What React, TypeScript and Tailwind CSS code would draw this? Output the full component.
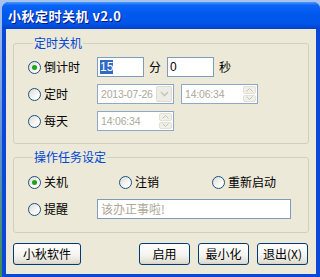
const font = "font-['Noto_Sans_CJK_SC','Noto_Sans',sans-serif]";

const Radio = ({ checked }: { checked?: boolean }) => (
  <span className="w-[13px] h-[13px] shrink-0 rounded-full border border-[#1C5180] bg-[linear-gradient(135deg,#DCDCD7_0%,#FFFFFF_80%)] flex items-center justify-center">
    {checked && <span className="w-[5px] h-[5px] rounded-full bg-[#21A121]" />}
  </span>
);

const RadioLabel = ({ label, checked, className }: { label: string; checked?: boolean; className?: string }) => (
  <label className={`flex items-center gap-[3px] text-[12px] leading-[14px] text-black ${className ?? ''}`}>
    <Radio checked={checked} />
    <span>{label}</span>
  </label>
);

const Spin = () => (
  <span className="flex flex-col gap-[1px] w-[13px] h-[16px] shrink-0">
    <span className="flex-1 rounded-[2px] bg-[#F0EFE8] border border-[#E2E1D8] flex items-center justify-center">
      <svg width="7" height="4" viewBox="0 0 7 4"><path d="M0.5 3.5 L3.5 0.5 L6.5 3.5" fill="none" stroke="#C3C2B8" strokeWidth="1" /></svg>
    </span>
    <span className="flex-1 rounded-[2px] bg-[#F0EFE8] border border-[#E2E1D8] flex items-center justify-center">
      <svg width="7" height="4" viewBox="0 0 7 4"><path d="M0.5 0.5 L3.5 3.5 L6.5 0.5" fill="none" stroke="#C3C2B8" strokeWidth="1" /></svg>
    </span>
  </span>
);

const Dropdown = () => (
  <span className="w-[16px] h-[16px] shrink-0 rounded-[2px] bg-[#EEEDE5] border border-[#DEDDD4] flex items-center justify-center">
    <svg width="9" height="6" viewBox="0 0 9 6"><path d="M1 1 L4.5 4.5 L8 1" fill="none" stroke="#C6C5BC" strokeWidth="1.6" /></svg>
  </span>
);

const TimeBox = ({ text, drop }: { text: string; drop?: boolean }) => (
  <div className="w-[77px] h-[20px] border border-[#8FA8C8] bg-white flex items-center justify-between pl-[3px] pr-[1px]">
    <span className="font-['Liberation_Sans',sans-serif] text-[10.5px] leading-none whitespace-nowrap tracking-[-0.2px] text-[#ACA899]">{text}</span>
    {drop ? <Dropdown /> : <Spin />}
  </div>
);

const Btn = ({ label, w }: { label: string; w: string }) => (
  <button className={`${w} h-[22px] rounded-[3px] border border-[#003C74] bg-[linear-gradient(180deg,#FFFFFF_0%,#F5F4EF_55%,#E3E0D6_90%,#D6D0C5_100%)] text-[12px] leading-[14px] text-black flex items-center justify-center`}>
    {label}
  </button>
);

export default function App() {
  return (
    <div className={`w-[320px] h-[277px] bg-[linear-gradient(180deg,#A9C3EE_0%,#5E8FD6_50%,#3E8E4A_100%)] pl-[2px] pt-[2px] overflow-hidden ${font}`}>
      <div className="w-[318px] h-[275px] flex flex-col rounded-t-[7px] overflow-hidden bg-[#0B48D8]">
        <div className="h-[27px] shrink-0 flex items-center pl-[6px] bg-[linear-gradient(180deg,#4A9BFF_0%,#0A64F5_12%,#0058EE_45%,#0055E6_80%,#0042D0_100%)]">
          <span className="text-white font-bold text-[13px] tracking-[0.5px] [text-shadow:1px_1px_0_#0A1883]">小秋定时关机 v2.0</span>
        </div>
        <div className="flex-1 mx-[4px] mb-[3px] bg-[#ECE9D8] flex flex-col pt-[7px] pl-[7px] pr-[7px]">
          <fieldset className="border border-[#D0D0BF] rounded-[3px] pl-[14px] pt-[7px] pb-[12px] flex flex-col gap-[7px]">
            <legend className="ml-[5px] px-[1px] text-[12px] leading-[14px] text-[#0046D5]">定时关机</legend>
            <div className="flex items-center h-[20px]">
              <RadioLabel label="倒计时" checked className="w-[69px]" />
              <div className="w-[47px] h-[20px] border border-[#7F9DB9] bg-white flex items-center pl-[2px]">
                <span className="bg-[#316AC5] text-white font-['Liberation_Sans',sans-serif] text-[12px] leading-[14px]">15</span>
              </div>
              <span className="ml-[5px] w-[12px] text-[12px] leading-[14px]">分</span>
              <div className="ml-[6px] w-[47px] h-[20px] border border-[#7F9DB9] bg-white flex items-center pl-[2px]">
                <span className="font-['Liberation_Sans',sans-serif] text-[12px] leading-[14px]">0</span>
              </div>
              <span className="ml-[5px] text-[12px] leading-[14px]">秒</span>
            </div>
            <div className="flex items-center h-[20px]">
              <RadioLabel label="定时" className="w-[69px]" />
              <TimeBox text="2013-07-26" drop />
              <div className="ml-[7px]">
                <TimeBox text="14:06:34" />
              </div>
            </div>
            <div className="flex items-center h-[20px]">
              <RadioLabel label="每天" className="w-[69px]" />
              <TimeBox text="14:06:34" />
            </div>
          </fieldset>
          <fieldset className="mt-[6px] border border-[#D0D0BF] rounded-[3px] pl-[14px] pt-[8px] pb-[13px] flex flex-col gap-[7px]">
            <legend className="ml-[5px] px-[1px] text-[12px] leading-[14px] text-[#0046D5]">操作任务设定</legend>
            <div className="flex items-center h-[20px]">
              <RadioLabel label="关机" checked className="w-[91px]" />
              <RadioLabel label="注销" className="w-[93px]" />
              <RadioLabel label="重新启动" />
            </div>
            <div className="flex items-center h-[20px]">
              <RadioLabel label="提醒" className="w-[69px]" />
              <div className="w-[194px] h-[20px] border border-[#7F9DB9] bg-white flex items-center pl-[3px]">
                <span className="text-[12px] leading-[14px] text-[#ACA899]">该办正事啦!</span>
              </div>
            </div>
          </fieldset>
          <div className="mt-[10px] flex items-center justify-between pr-[1px]">
            <Btn label="小秋软件" w="w-[68px]" />
            <div className="flex gap-[8px]">
              <Btn label="启用" w="w-[51px]" />
              <Btn label="最小化" w="w-[51px]" />
              <Btn label="退出(X)" w="w-[51px]" />
            </div>
          </div>
        </div>
      </div>
    </div>
  );
}
